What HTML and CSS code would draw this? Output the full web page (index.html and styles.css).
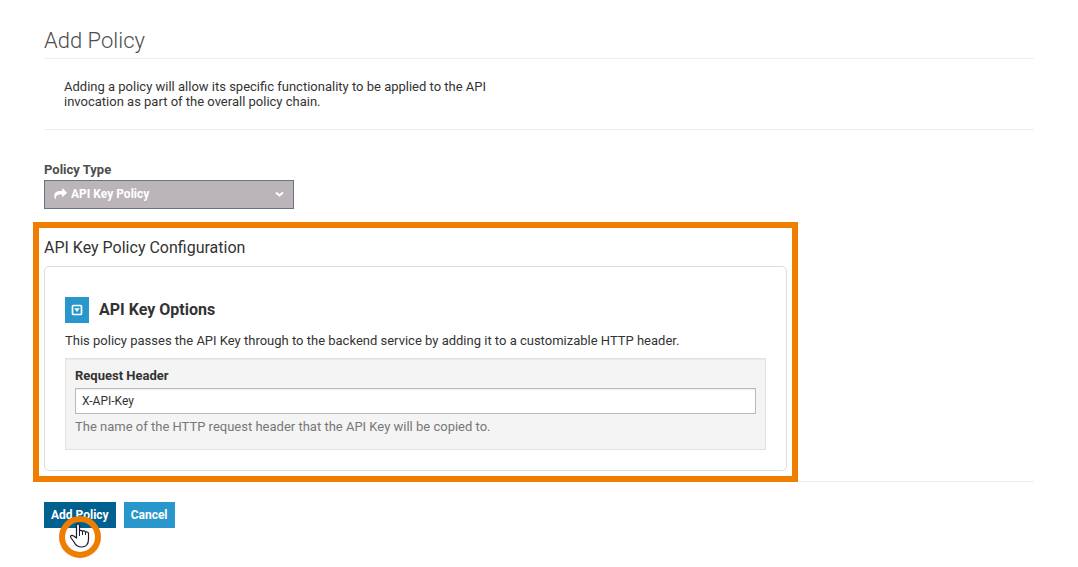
FILE: index.html
```html
<!DOCTYPE html>
<html lang="en">
<head>
  <meta charset="UTF-8">
  <meta name="viewport" content="width=device-width, initial-scale=1.0">
  <title>Add Policy</title>
  <link rel="stylesheet" href="styles.css">
</head>
<body>
  <main class="page">
    <h1>Add Policy</h1>
    <div class="intro">
      <p>Adding a policy will allow its specific functionality to be applied to the API invocation as part of the overall policy chain.</p>
    </div>

    <form>
      <div class="policy-type">
        <label for="policy-type">Policy Type</label>
        <div class="select-wrap">
          <select id="policy-type">
            <option>API Key Policy</option>
          </select>
          <svg class="share" width="13" height="12" viewBox="0 0 13 12" aria-hidden="true">
            <path fill="#fff" d="M12.800 4.400 9 .6C8.700.3 8.200.5 8.200.9v2H6.500C2.500 2.900.2 4.600.2 8c0 1.200.5 2.300 1 3.200.2.300.6.200.5-.2C1.400 8 3 6.500 6.500 6.500h1.700v2c0 .5.5.6.800.3l3.800-3.800c.2-.2.2-.4 0-.6z"/>
          </svg>
          <svg class="chevron" width="9" height="7" viewBox="0 0 9 7" aria-hidden="true">
            <path fill="none" stroke="#fff" stroke-width="2" d="M1 1.500l3.500 3L8 1.500"/>
          </svg>
        </div>
      </div>

      <!-- Policy configuration -->
      <section class="config">
        <h2>API Key Policy Configuration</h2>
        <div class="card">
          <div class="card-title">
            <button type="button" class="toggle" aria-label="Toggle options">
              <svg width="12" height="12" viewBox="0 0 12 12" aria-hidden="true">
                <rect x="1.500" y="1.500" width="9" height="9" rx="1" fill="none" stroke="#fff" stroke-width="1.700"/>
                <path fill="#fff" d="M3.300 4.300h5.400L6 8z"/>
              </svg>
            </button>
            <h3>API Key Options</h3>
          </div>
          <p>This policy passes the API Key through to the backend service by adding it to a customizable HTTP header.</p>
          <div class="well">
            <label for="request-header">Request Header</label>
            <input type="text" id="request-header" value="X-API-Key">
            <p class="help">The name of the HTTP request header that the API Key will be copied to.</p>
          </div>
        </div>
      </section>

      <div class="actions">
        <button type="submit" class="btn btn-primary">Add Policy</button>
        <button type="button" class="btn">Cancel</button>
        <svg class="pointer" width="42" height="42" viewBox="0 0 42 42" aria-hidden="true">
          <circle cx="21" cy="21" r="18" fill="none" stroke="#ef7d00" stroke-width="6"/>
          <path fill="#fff" stroke="#1a1a2e" stroke-width="1.200" stroke-linejoin="round" d="M17.500 22V9.500c0-2 3-2 3 0V15c.5-1 2.500-1 3 .5.5-1 2.500-.8 3 .8.8-.8 3-.5 3 1.200V23c0 5-2 8-7 8-4 0-6-2-7.500-5l-3.200-4.500c-.8-1.500 1-3 2.500-1.700z"/>
          <path fill="none" stroke="#1a1a2e" d="M20.500 15v5M23.500 15.500V19M26.500 16.500V19"/>
        </svg>
      </div>
    </form>
  </main>
</body>
</html>
```

FILE: styles.css
```css
:root {
  --blue: #2996cc;
  --blue-dark: #006090;
  --orange: #ef7d00;
  --text: #333;
  --text-soft: #4d4d4d;
  --rule: #eee;
}

* {
  box-sizing: border-box;
}

body {
  margin: 0;
  font-family: Roboto, Arial, sans-serif;
  font-size: 13px;
  line-height: 15px;
  color: var(--text);
  background: #fff;
}

h1, h2, h3, p {
  margin: 0;
}

.page {
  min-height: 100vh;
  padding: 26px 44px 24px;
}

h1 {
  padding-bottom: 2px;
  border-bottom: 1px solid var(--rule);
  color: var(--text-soft);
  font-size: 22px;
  font-weight: 300;
  line-height: 30px;
}

.intro {
  padding: 20px;
  border-bottom: 1px solid var(--rule);
}
.intro p {
  max-width: 450px;
}

label {
  display: block;
  font-weight: 700;
}

/* Policy type */
.policy-type {
  padding-top: 32px;
  color: var(--text-soft);
}
.select-wrap {
  position: relative;
  width: 250px;
  margin-top: 3px;
}
.select-wrap select {
  display: block;
  width: 100%;
  height: 29px;
  padding: 0 26px 2px;
  border: 1px solid #6b737f;
  border-radius: 0;
  background: #bbb5b9;
  color: #fff;
  font: 700 12px Roboto, Arial, sans-serif;
  appearance: none;
}
.share {
  position: absolute;
  top: 8px;
  left: 10px;
}
.chevron {
  position: absolute;
  top: 11px;
  right: 10px;
}

/* Configuration */
.config {
  position: relative;
  z-index: 1;
  width: 75%;
  margin-top: 28px;
}
.config::after {
  content: "";
  position: absolute;
  inset: -15px -11px -11px;
  border: 6px solid var(--orange);
  pointer-events: none;
}
h2 {
  padding-top: 1px;
  margin-bottom: 8px;
  font-size: 16px;
  font-weight: 400;
  line-height: 20px;
}
.card {
  padding: 30px 20px 20px;
  border: 1px solid #ddd;
  border-radius: 5px;
}
.card-title {
  display: flex;
  align-items: center;
  gap: 10px;
  margin-bottom: 10px;
}
.toggle {
  display: flex;
  align-items: center;
  justify-content: center;
  width: 24px;
  height: 26px;
  padding: 0;
  border: 0;
  background: var(--blue);
}
h3 {
  font-size: 16px;
  font-weight: 700;
  line-height: 20px;
}
.well {
  margin-top: 10px;
  padding: 9px 9px 15px;
  border: 1px solid #e1e1e1;
  background: #f4f4f4;
  box-shadow: inset 0 1px 1px rgba(0, 0, 0, 0.05);
}
.well input {
  display: block;
  width: 100%;
  height: 26px;
  margin: 5px 0;
  padding: 0 6px;
  border: 1px solid #bababa;
  background: #fff;
  box-shadow: inset 0 1px 1px rgba(0, 0, 0, 0.075);
  color: var(--text);
  font: 12px Roboto, Arial, sans-serif;
}
.help {
  color: #777;
}

/* Buttons */
.actions {
  position: relative;
  display: flex;
  gap: 8px;
  margin-top: 10px;
  padding-top: 20px;
  border-top: 1px solid var(--rule);
}
.btn {
  height: 26px;
  padding: 0 7px;
  border: 0;
  background: var(--blue);
  color: #fff;
  font: 700 12px Roboto, Arial, sans-serif;
}
.btn-primary {
  background: var(--blue-dark);
}
.pointer {
  position: absolute;
  top: 34px;
  left: 15px;
}
```
